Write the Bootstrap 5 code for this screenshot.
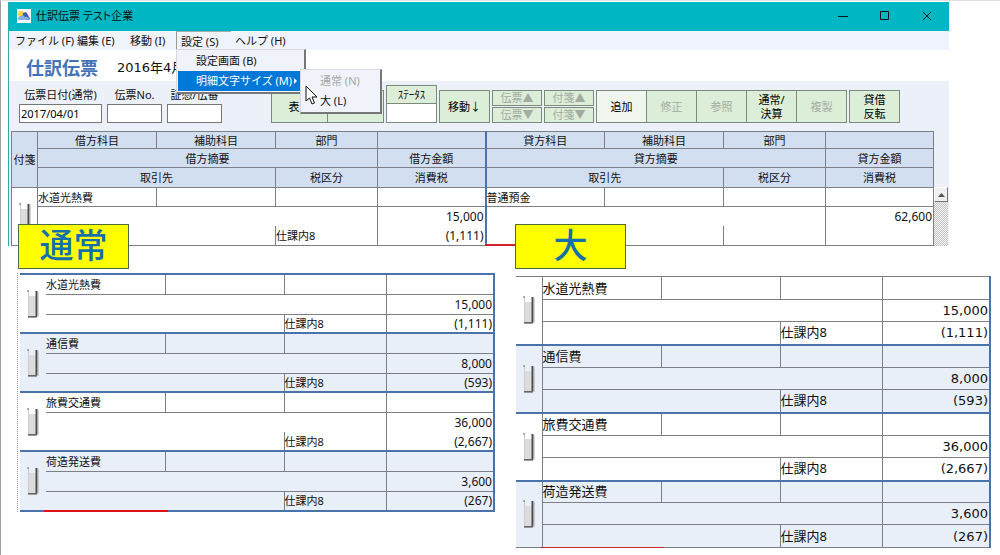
<!DOCTYPE html>
<html lang="ja">
<head>
<meta charset="utf-8">
<meta name="viewport" content="width=device-width, initial-scale=1">
<title>仕訳伝票</title>
<link href="https://cdn.jsdelivr.net/npm/bootstrap@5.3.0/dist/css/bootstrap.min.css" rel="stylesheet">
<style>
:root{--ink:#111;--line:#7d7f88;--blue:#4a72ab;--pane:#ecf0f8;--green:#dcedd8}
body{font-family:"Noto Sans","Noto Sans CJK JP",sans-serif;font-size:12px;line-height:16px;color:var(--ink);background:#fff}
.sheet{border-left:1px solid #a0a0a0;border-top:1px solid #e2e2e2;min-height:100vh;padding-top:1px}
.app{margin-left:7px;margin-right:51px;background:var(--pane);border-left:1px solid #2fa9a9}
.titlebar{height:29px;background:#00b7c3;padding:0 15px 2px 8px}
.titlebar .caption{font-feature-settings:"palt";font-size:11px;padding-left:5px}
.winbtn{background:none;border:0;padding:0;width:14px;height:14px;display:flex;align-items:center;justify-content:center}
.winbtns{gap:28px}
.menubar{height:19px;font-size:11px;background:#eff3fb;font-feature-settings:"palt";padding-left:6px}
.menubar .top{border:0;background:none;padding:0;height:19px;line-height:18px;color:var(--ink);text-align:left;white-space:nowrap}
.menubar .opened{border-left:1px solid #999;border-top:1px solid #aaa;line-height:17px}
.m-file{width:62px}.m-edit{width:53px}.m-move{width:46px}.m-set{width:55px}
.pop{position:absolute;background:#f0f3fa;border:1px solid #d5d8de;border-right:2px solid #777;border-bottom:2px solid #777;padding:1px;z-index:5}
.pop button{display:flex;align-items:center;gap:2px;width:100%;height:20px;border:0;background:none;padding:0 0 0 18px;color:var(--ink);white-space:nowrap}
.pop .picked{background:#0078d7;color:#fff}
.pop button:disabled{color:#a5a5a5}
.pop-main{left:0;top:18px;width:130px}
.pop-sub{left:124px;top:38px;width:82px;z-index:6}
.pointer{position:absolute;left:129px;top:54px;z-index:7}
.heading{height:31px;background:#fff;padding:5px 0 0 17px}
.heading h1{font-size:18px;line-height:24px;font-weight:700;color:#4472b8}
.heading .period{font-family:"DejaVu Sans","Noto Sans CJK JP",sans-serif;font-size:13px;margin-left:19px}
.tools{height:50px;padding:0 0 8px 10px;white-space:nowrap}
.field label{display:block;font-size:11px;line-height:16px;text-align:center;padding-bottom:1px}
.field input{display:block;height:19px;border:1px solid #777;border-radius:0;background:#fff;padding:0 1px;font-size:11px;width:55px}
.field .wide{width:83px}
.fields{gap:5px;margin-right:49px}
.groups{gap:2px}
.tool{border:1px solid #7b8a7b;background:var(--green);padding:0;width:51px;height:33px;font-size:11px;line-height:14px;color:#000}
.tool-wide{width:57px}
.tool-light{background:#f0f6ee}
.joined .tool+.tool{margin-left:-1px}
.tool:disabled,.mini:disabled{color:#a3aca3}
.mini{display:block;border:1px solid #7b8a7b;background:var(--green);padding:0;width:50px;height:16px;font-size:11px;line-height:14px}
.mini+.mini{margin-top:1px}
.state{width:51px;height:38px;border:1px solid #7b8a7b;background:#fff;font-size:11px;text-align:center}
.state div{background:var(--green);border-bottom:1px solid #7b8a7b;height:18px;line-height:18px}
.voucher{width:100%;table-layout:fixed;border-collapse:collapse;font-size:11px;line-height:15px}
.voucher td,.voucher th{padding:0;border:1px solid var(--line);font-weight:400;vertical-align:middle;position:relative;overflow:visible;white-space:nowrap}
.voucher th{background:#d1dff1;text-align:center}
.voucher svg{display:block;margin:auto}
.voucher .num{text-align:right;font-size:12px;padding-right:1px}
.c-clip{width:26px}.c-name{width:119px}.c-tax{width:102px}.c-sum{width:108px}
.h-a{height:17px}.h-b{height:19px}.h-c{height:20px}
.journal td{background:#fff}
.journal .side{border-left:2px solid var(--blue)}
.voucher .nt{border-top:0}.voucher .nb{border-bottom:0}.voucher .nl{border-left:0}
.mark-red{position:absolute;left:-2px;bottom:-1px;width:52%;height:1px;background:#d02028;z-index:1}
.journal .mark-red{height:2px}
.thick .mark-red{height:2px;bottom:-2px;background:#e01018}
.scroller{width:14px;padding-top:56px}
.scroller button{display:flex;align-items:center;justify-content:center;width:14px;height:15px;padding:0;border:1px solid #fff;border-right-color:#777;border-bottom-color:#777;background:#efefef}
.track{flex:1;background:repeating-conic-gradient(#c4c4c4 0 25%,#f4f4f4 0 50%) 0 0/2px 2px}
.samples{display:grid;grid-template-columns:477fr 475fr;column-gap:21px;padding:0 10px 0 16px}
.tag{position:relative;z-index:2;width:111px;height:45px;margin-top:-22px;background:#ff0;border:1px solid #4d6b3c;color:#1470a8;font-size:34px;line-height:41px;font-weight:500;text-align:center}
.tag-small{margin-left:1px;margin-bottom:4px}
.tag-large{margin-left:-1px;margin-bottom:7px}
.detail tbody:nth-of-type(even) td{background:#e9eff8}
.detail tbody{border-top:2px solid var(--blue);border-bottom:2px solid var(--blue)}
.detail{border-right:2px solid var(--blue)}
.detail .clip{border-left:0}
.thick .clip{border-right:0}
.edge{border-left:1px dotted #9aa0a8;padding-left:2px}
.big{font-size:13px;line-height:17px}
.big .num{font-family:"DejaVu Sans",sans-serif;font-size:13px}
.big tbody:first-of-type{border-top:1px solid var(--line)}
.big tbody:last-of-type{border-bottom:1px solid var(--line)}
.r20{height:20px}.r19{height:19px}.r23{height:23px}.r22{height:22px}
</style>
</head>
<body>
<svg width="0" height="0" class="position-absolute" aria-hidden="true">
  <symbol id="clip" viewBox="0 0 12 28">
    <path d="M1 1h1v25H1z" fill="#ccc"/><path d="M2 6h7v20H2z" fill="#dcdcdc"/><path d="M0 1h2M1 26.5h9" stroke="#666" fill="none"/><path d="M9.500 1v25" stroke="#4c4c4c" stroke-width="2"/><path d="M11 2v25" stroke="#aaa"/><path d="M1 27.5h9" stroke="#999"/>
  </symbol>
</svg>
<div class="sheet">
  <main class="app">
    <header class="titlebar d-flex align-items-center">
      <svg width="14" height="14" viewBox="0 0 14 14" aria-hidden="true"><path fill="#f4f6f8" d="M0 0h14v14H0z"/><circle cx="4" cy="5" r="3" fill="#ffd52e"/><path d="M5 9l1-5 3-1 2 3 2 4-1 1H5z" fill="#375fb5"/><path d="M1 10q0-3 3-3 2-2 4 1 3-1 4 2 0 1-2 1H3q-2 0-2-1z" fill="#8baee8"/></svg>
      <span class="caption">仕訳伝票 テスト企業</span>
      <div class="winbtns d-flex ms-auto">
        <button class="winbtn" aria-label="最小化"><svg width="10" height="10"><path d="M0 5.5h10" stroke="#111"/></svg></button>
        <button class="winbtn" aria-label="最大化"><svg width="10" height="10"><path d="M.5 .5h8v8h-8z" fill="none" stroke="#111"/></svg></button>
        <button class="winbtn" aria-label="閉じる"><svg width="10" height="10"><path d="M1 1l8 8M9 1l-8 8" stroke="#111"/></svg></button>
      </div>
    </header>
    <nav class="menubar d-flex">
      <button class="top m-file">ファイル (F)</button>
      <button class="top m-edit">編集 (E)</button>
      <button class="top m-move">移動 (I)</button>
      <div class="position-relative">
        <button class="top opened px-1 m-set">設定 (S)</button>
        <div class="pop pop-main">
          <button>設定画面 (B)</button>
          <button class="picked">明細文字サイズ (M)<svg width="4" height="8"><path d="M0 1l3 3-3 3z" fill="#fff"/></svg></button>
        </div>
        <div class="pop pop-sub">
          <button disabled>通常 (N)</button>
          <button>大 (L)</button>
        </div>
        <svg class="pointer" width="13" height="20" viewBox="0 0 13 20" aria-hidden="true"><path d="M1 1v15l3.500-3 2.500 6 2.500-1-2.500-6h5z" fill="#fff" stroke="#111"/></svg>
      </div>
      <button class="top ps-1">ヘルプ (H)</button>
    </nav>
    <div class="heading d-flex align-items-center">
      <h1 class="m-0">仕訳伝票</h1><span class="period">2016年4月</span>
    </div>
    <div class="tools d-flex align-items-end">
      <div class="fields d-flex">
        <div class="field"><label for="d">伝票日付(通常)</label><input id="d" class="wide" value="2017/04/01"></div>
        <div class="field"><label for="n">伝票No.</label><input id="n"></div>
        <div class="field"><label for="e">証憑/伝番</label><input id="e"></div>
      </div>
      <div class="groups d-flex align-items-end">
        <div class="joined d-flex"><button class="tool tool-wide">表示</button><button class="tool tool-wide" aria-label="表示"></button></div>
        <div class="state"><div>ｽﾃｰﾀｽ</div></div>
        <button class="tool">移動↓</button>
        <div><button class="mini" disabled>伝票▲</button><button class="mini" disabled>伝票▼</button></div>
        <div><button class="mini" disabled>付箋▲</button><button class="mini" disabled>付箋▼</button></div>
        <div class="joined d-flex"><button class="tool tool-light">追加</button><button class="tool" disabled>修正</button><button class="tool" disabled>参照</button><button class="tool">通常/<br>決算</button><button class="tool" disabled>複製</button></div>
        <button class="tool">貸借<br>反転</button>
      </div>
    </div>
    <div class="d-flex" style="padding:0 1px 0 2px">
      <div class="flex-grow-1">
      <table class="voucher journal">
        <colgroup><col class="c-clip"><col class="c-name"><col class="c-name"><col class="c-tax"><col class="c-sum"><col class="c-name"><col class="c-name"><col class="c-tax"><col class="c-sum"></colgroup>
        <thead>
          <tr class="h-a"><th rowspan="3">付箋</th><th>借方科目</th><th>補助科目</th><th>部門</th><th></th><th class="side">貸方科目</th><th>補助科目</th><th>部門</th><th></th></tr>
          <tr class="h-b"><th colspan="3">借方摘要</th><th>借方金額</th><th colspan="3" class="side">貸方摘要</th><th>貸方金額</th></tr>
          <tr class="h-c"><th colspan="2">取引先</th><th>税区分</th><th>消費税</th><th colspan="2" class="side">取引先</th><th>税区分</th><th>消費税</th></tr>
        </thead>
        <tbody>
          <tr class="h-b"><td rowspan="3"><svg width="12" height="28"><use href="#clip"/></svg></td><td>水道光熱費</td><td></td><td></td><td></td><td class="side">普通預金</td><td></td><td></td><td></td></tr>
          <tr class="h-b"><td colspan="3" class="nb"></td><td class="num nb">15,000</td><td colspan="3" class="side nb"></td><td class="num nb">62,600</td></tr>
          <tr class="h-c"><td colspan="2" class="nt"></td><td class="nt">仕課内8</td><td class="num nt">(1,111)</td><td colspan="2" class="side nt"><span class="mark-red"></span></td><td class="nt"></td><td class="nt"></td></tr>
        </tbody>
      </table>
      </div>
      <div class="scroller d-flex flex-column"><button aria-label="上へ"><svg width="7" height="4"><path d="M0 4l3.500-4L7 4z" fill="#555"/></svg></button><div class="track"></div></div>
    </div>
  </main>

  <section class="samples">
    <div>
      <div class="tag tag-small">通常</div>
      <div class="edge">
      <table class="voucher detail thick">
        <colgroup><col class="c-clip"><col class="c-name"><col class="c-name"><col class="c-tax"><col class="c-sum"></colgroup>
        <tbody>
          <tr class="r20"><td rowspan="3" class="clip"><svg width="12" height="28"><use href="#clip"/></svg></td><td class="nl">水道光熱費</td><td></td><td></td><td></td></tr>
          <tr class="r20"><td colspan="3" class="nl"></td><td class="num">15,000</td></tr>
          <tr class="r19"><td colspan="2" class="nl"></td><td>仕課内8</td><td class="num">(1,111)</td></tr>
        </tbody>
        <tbody>
          <tr class="r20"><td rowspan="3" class="clip"><svg width="12" height="28"><use href="#clip"/></svg></td><td class="nl">通信費</td><td></td><td></td><td></td></tr>
          <tr class="r20"><td colspan="3" class="nl"></td><td class="num">8,000</td></tr>
          <tr class="r19"><td colspan="2" class="nl"></td><td>仕課内8</td><td class="num">(593)</td></tr>
        </tbody>
        <tbody>
          <tr class="r20"><td rowspan="3" class="clip"><svg width="12" height="28"><use href="#clip"/></svg></td><td class="nl">旅費交通費</td><td></td><td></td><td></td></tr>
          <tr class="r20"><td colspan="3" class="nl nb"></td><td class="num nb">36,000</td></tr>
          <tr class="r19"><td colspan="2" class="nl nt"></td><td class="nt">仕課内8</td><td class="num nt">(2,667)</td></tr>
        </tbody>
        <tbody>
          <tr class="r20"><td rowspan="3" class="clip"><svg width="12" height="28"><use href="#clip"/></svg></td><td class="nl">荷造発送費</td><td></td><td></td><td></td></tr>
          <tr class="r20"><td colspan="3" class="nl"></td><td class="num">3,600</td></tr>
          <tr class="r20"><td colspan="2" class="nl"><span class="mark-red"></span></td><td>仕課内8</td><td class="num">(267)</td></tr>
        </tbody>
      </table>
      </div>
    </div>
    <div>
      <div class="tag tag-large">大</div>
      <table class="voucher detail big">
        <colgroup><col class="c-clip"><col class="c-name"><col class="c-name"><col class="c-tax"><col class="c-sum"></colgroup>
        <tbody>
          <tr class="r23"><td rowspan="3" class="clip"><svg width="12" height="28"><use href="#clip"/></svg></td><td>水道光熱費</td><td></td><td></td><td></td></tr>
          <tr class="r22"><td colspan="3"></td><td class="num">15,000</td></tr>
          <tr class="r23"><td colspan="2"></td><td>仕課内8</td><td class="num">(1,111)</td></tr>
        </tbody>
        <tbody>
          <tr class="r23"><td rowspan="3" class="clip"><svg width="12" height="28"><use href="#clip"/></svg></td><td>通信費</td><td></td><td></td><td></td></tr>
          <tr class="r22"><td colspan="3"></td><td class="num">8,000</td></tr>
          <tr class="r23"><td colspan="2"></td><td>仕課内8</td><td class="num">(593)</td></tr>
        </tbody>
        <tbody>
          <tr class="r23"><td rowspan="3" class="clip"><svg width="12" height="28"><use href="#clip"/></svg></td><td>旅費交通費</td><td></td><td></td><td></td></tr>
          <tr class="r22"><td colspan="3"></td><td class="num">36,000</td></tr>
          <tr class="r23"><td colspan="2"></td><td>仕課内8</td><td class="num">(2,667)</td></tr>
        </tbody>
        <tbody>
          <tr class="r22"><td rowspan="3" class="clip"><svg width="12" height="28"><use href="#clip"/></svg></td><td>荷造発送費</td><td></td><td></td><td></td></tr>
          <tr class="r22"><td colspan="3"></td><td class="num">3,600</td></tr>
          <tr class="r23"><td colspan="2"><span class="mark-red"></span></td><td>仕課内8</td><td class="num">(267)</td></tr>
        </tbody>
      </table>
    </div>
  </section>
</div>
<script src="https://cdn.jsdelivr.net/npm/bootstrap@5.3.0/dist/js/bootstrap.bundle.min.js"></script>
</body>
</html>
